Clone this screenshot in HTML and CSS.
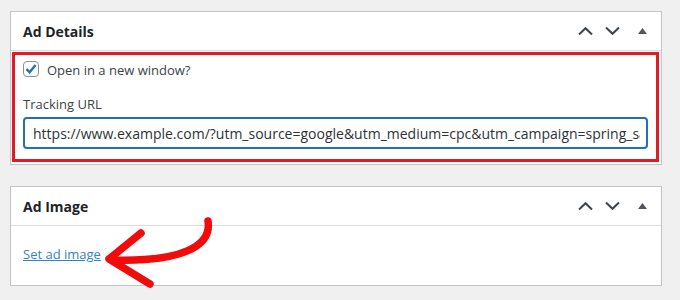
FILE: index.html
```html
<!DOCTYPE html>
<html lang="en">
<head>
    <meta charset="UTF-8">
    <title>Ad Details</title>
    <link rel="stylesheet" href="styles.css">
</head>
<body>
    <!-- Ad Details box -->
    <div class="postbox">
        <div class="postbox-header">
            <h2>Ad Details</h2>
            <div class="handles">
                <svg class="handle" width="15" height="8" viewBox="0 0 15 8"><path d="M1 7.5 L7.5 1.2 L14 7.5" fill="none" stroke="#3c434a" stroke-width="2"/></svg>
                <svg class="handle" width="15" height="8" viewBox="0 0 15 8"><path d="M1 0.5 L7.5 6.8 L14 0.5" fill="none" stroke="#3c434a" stroke-width="2"/></svg>
                <svg class="handle toggle" width="9" height="6" viewBox="0 0 9 6"><path d="M4.5 0 L9 6 L0 6 Z" fill="#50575e"/></svg>
            </div>
        </div>
        <div class="inside">
            <div class="highlight">
                <label class="check-row">
                    <span class="checkbox">
                        <svg width="14" height="14" viewBox="0 0 14 14"><path d="M2.5 7.2 L5.6 10.2 L11.6 3" fill="none" stroke="#2271b1" stroke-width="2.4"/></svg>
                    </span>
                    Open in a new window?
                </label>
                <div class="field-label">Tracking URL</div>
                <input class="url-input" type="text" value="https://www.example.com/?utm_source=google&amp;utm_medium=cpc&amp;utm_campaign=spring_sale">
            </div>
        </div>
    </div>

    <!-- Ad Image box -->
    <div class="postbox">
        <div class="postbox-header">
            <h2>Ad Image</h2>
            <div class="handles">
                <svg class="handle" width="15" height="8" viewBox="0 0 15 8"><path d="M1 7.5 L7.5 1.2 L14 7.5" fill="none" stroke="#3c434a" stroke-width="2"/></svg>
                <svg class="handle" width="15" height="8" viewBox="0 0 15 8"><path d="M1 0.5 L7.5 6.8 L14 0.5" fill="none" stroke="#3c434a" stroke-width="2"/></svg>
                <svg class="handle toggle" width="9" height="6" viewBox="0 0 9 6"><path d="M4.5 0 L9 6 L0 6 Z" fill="#50575e"/></svg>
            </div>
        </div>
        <div class="inside image-inside">
            <a href="#" class="set-image">Set ad image</a>
        </div>
    </div>

    <!-- hand drawn arrow annotation -->
    <svg class="annotation" width="680" height="300" viewBox="0 0 680 300">
        <path d="M208 221 C212 246 182 262 113 260" fill="none" stroke="#f20b0b" stroke-width="7.5" stroke-linecap="round"/>
        <path d="M141 233 L109 259 L150 284" fill="none" stroke="#f20b0b" stroke-width="7.5" stroke-linecap="round" stroke-linejoin="round"/>
    </svg>
</body>
</html>
```

FILE: styles.css
```css
body {
    margin: 0;
    padding: 11px 18px 0 10px;
    background: #f0f0f1;
    font-family: 'Open Sans', 'Noto Sans', sans-serif;
    color: #3c434a;
    position: relative;
    height: 300px;
    box-sizing: border-box;
    overflow: hidden;
}

.postbox {
    background: #fff;
    border: 1px solid #c3c4c7;
    margin-bottom: 21px;
}

.postbox-header {
    display: flex;
    align-items: center;
    justify-content: space-between;
    height: 38px;
    padding: 0 14px 0 12px;
    border-bottom: 1px solid #dcdcde;
}

.postbox-header h2 {
    margin: 0;
    font-size: 14px;
    font-weight: 700;
    color: #1d2327;
}

.handles {
    display: flex;
    align-items: center;
    gap: 12px;
}

.handle.toggle {
    margin-left: 6px;
}

.highlight {
    border: 3px solid #e01b24;
    margin: 1px 2px 2px 1px;
    padding: 6px 8px 10px 8px;
}

.check-row {
    display: flex;
    align-items: center;
    gap: 8px;
    font-size: 13px;
    height: 16px;
    line-height: 16px;
    padding-top: 1px;
}

.checkbox {
    width: 14px;
    height: 14px;
    border: 1px solid #8c8f94;
    border-radius: 4px;
    display: flex;
    align-items: center;
    justify-content: center;
    margin-top: -2px;
}

.field-label {
    font-size: 13px;
    line-height: 18px;
    margin-top: 17px;
}

.url-input {
    display: block;
    width: 100%;
    box-sizing: border-box;
    margin-top: 4px;
    height: 32px;
    border: 2px solid #2271b1;
    border-radius: 4px;
    padding: 0 6px 0 8px;
    font-family: 'Open Sans', 'Noto Sans', sans-serif;
    font-size: 14px;
    color: #2c3338;
    outline: none;
}

.image-inside {
    height: 59px;
    padding: 16px 12px 0;
    box-sizing: border-box;
}

.set-image {
    font-size: 13px;
    color: #3582c4;
    text-decoration: underline;
}

.annotation {
    position: absolute;
    left: 0;
    top: 0;
    pointer-events: none;
}
```
